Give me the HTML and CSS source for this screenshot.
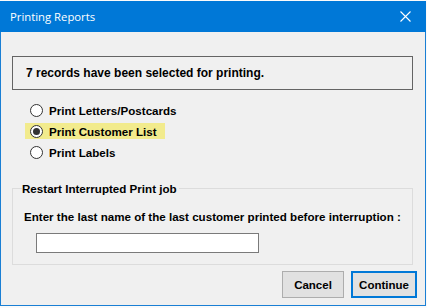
FILE: index.html
```html
<!DOCTYPE html>
<html lang="en">
<head>
    <meta charset="UTF-8">
    <title>Printing Reports</title>
    <link rel="stylesheet" href="styles.css">
</head>
<body>
<div class="window">
    <div class="titlebar">
        <span class="title">Printing Reports</span>
        <svg class="close" width="11" height="11" viewBox="0 0 11 11">
            <path d="M0.5 0.5 L10.5 10.5 M10.5 0.5 L0.5 10.5" stroke="#fff" stroke-width="1.1" fill="none"/>
        </svg>
    </div>

    <div class="content">
        <div class="message">7 records have been selected for printing.</div>

        <div class="options">
            <label class="option"><input type="radio" name="report"> Print Letters/Postcards</label>
            <label class="option selected"><input type="radio" name="report" checked> Print Customer List</label>
            <label class="option"><input type="radio" name="report"> Print Labels</label>
        </div>

        <fieldset class="restart">
            <legend>Restart Interrupted Print job</legend>
            <p class="hint">Enter the last name of the last customer printed before interruption :</p>
            <input type="text" class="lastname">
        </fieldset>

        <div class="buttons">
            <button class="btn">Cancel</button>
            <button class="btn default">Continue</button>
        </div>
    </div>
</div>
</body>
</html>
```

FILE: styles.css
```css
html {
    background-color: #fafafa;
}
body {
    margin: 0;
    padding-top: 1px;
    font-family: "Liberation Sans", Arial, sans-serif;
    font-size: 11.6px;
    font-weight: bold;
    color: #000;
}
.window {
    width: 426px;
    height: 305px;
    box-sizing: border-box;
    border: 1px solid #1a7fd4;
    border-top: none;
    background-color: #f0f0f0;
    display: flex;
    flex-direction: column;
}
.titlebar {
    height: 31px;
    background-color: #0078d7;
    display: flex;
    align-items: center;
    justify-content: space-between;
    padding: 0 10px 0 10px;
    margin: 0 -1px;
}
.title {
    font-family: "Open Sans", "Noto Sans", sans-serif;
    font-weight: normal;
    font-size: 11.3px;
    color: #fff;
    padding-bottom: 1px;
}
.close {
    margin-right: 5px;
    margin-bottom: 1px;
}
.content {
    flex: 1;
    padding: 24px 8px 0 11px;
    display: flex;
    flex-direction: column;
}
.message {
    width: 401px;
    height: 34px;
    box-sizing: border-box;
    border: 1px solid #646464;
    padding-left: 13px;
    display: flex;
    align-items: center;
    font-size: 12px;
}
.options {
    display: flex;
    flex-direction: column;
    align-items: flex-start;
    margin-top: 12px;
    margin-left: 13px;
}
.option {
    display: flex;
    align-items: center;
    height: 16px;
    padding: 0 8px 0 5px;
    margin-bottom: 5px;
}
.option.selected {
    background-color: #f2eb8d;
}
.option input {
    appearance: none;
    -webkit-appearance: none;
    width: 13px;
    height: 13px;
    margin: 0 6px 0 0;
    border: 1px solid #333;
    border-radius: 50%;
    background-color: #fff;
    display: flex;
    align-items: center;
    justify-content: center;
}
.option input:checked::after {
    content: "";
    width: 7px;
    height: 7px;
    border-radius: 50%;
    background-color: #333;
}
.restart {
    width: 401px;
    height: 83px;
    box-sizing: border-box;
    margin: 17px 0 0 0;
    padding: 0 0 0 11px;
    border: 1px solid #dcdcdc;
}
.restart legend {
    padding: 0 2px 0 0;
    margin-left: -2px;
}
.hint {
    margin: 15px 0 0 0;
}
.lastname {
    display: block;
    width: 223px;
    height: 20px;
    box-sizing: border-box;
    border: 1px solid #7a7a7a;
    margin: 10px 0 0 12px;
    background-color: #fff;
}
.buttons {
    display: flex;
    justify-content: flex-end;
    gap: 7px;
    margin-top: 6px;
}
.btn {
    font-family: inherit;
    font-size: 11.5px;
    font-weight: bold;
    height: 27px;
    background-color: #e1e1e1;
    border: 1px solid #adadad;
    padding: 0;
    width: 62px;
    color: #000;
}
.btn.default {
    width: 66px;
    border: 2px solid #0078d7;
}
```
